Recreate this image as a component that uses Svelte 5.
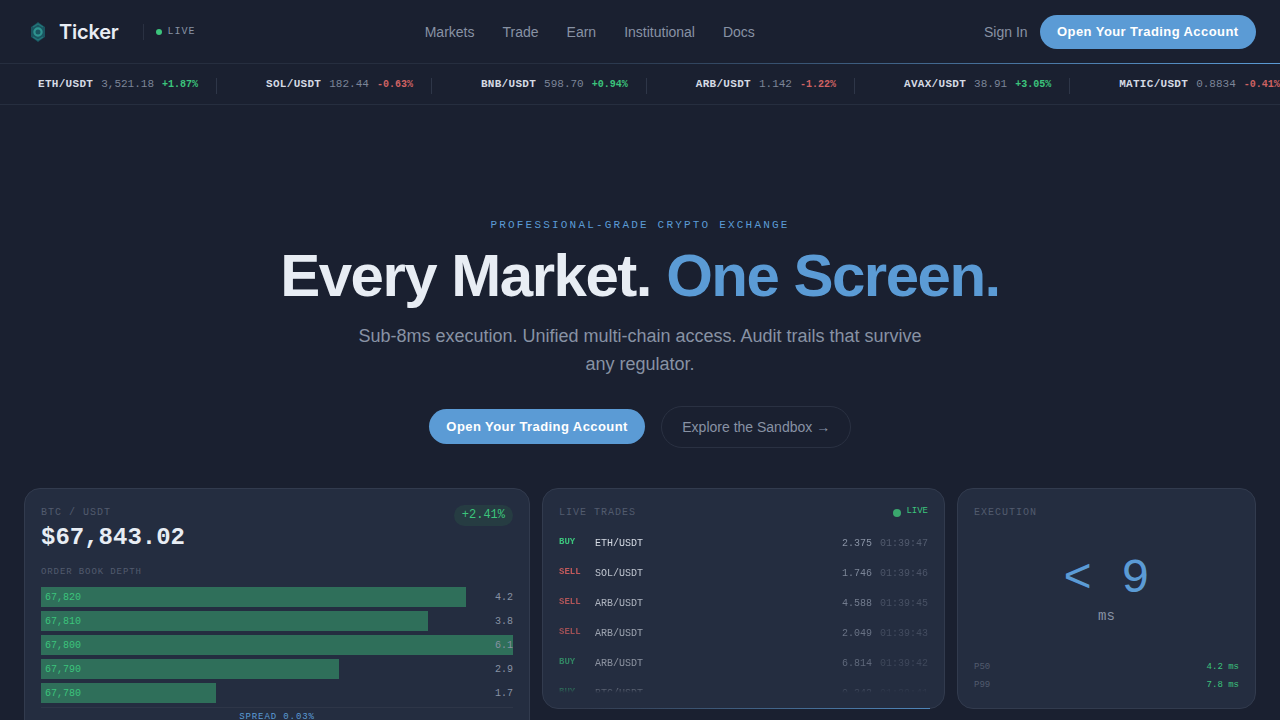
<script lang="ts">
	const navLinks = ['Markets', 'Trade', 'Earn', 'Institutional', 'Docs'];

	const tickers = [
		{ pair: 'ETH/USDT', price: '3,521.18', change: '+1.87%', up: true },
		{ pair: 'SOL/USDT', price: '182.44', change: '-0.63%', up: false },
		{ pair: 'BNB/USDT', price: '598.70', change: '+0.94%', up: true },
		{ pair: 'ARB/USDT', price: '1.142', change: '-1.22%', up: false },
		{ pair: 'AVAX/USDT', price: '38.91', change: '+3.05%', up: true },
		{ pair: 'MATIC/USDT', price: '0.8834', change: '-0.41%', up: false }
	];

	const depth = [
		{ price: '67,820', size: '4.2', pct: 90 },
		{ price: '67,810', size: '3.8', pct: 82 },
		{ price: '67,800', size: '6.1', pct: 100 },
		{ price: '67,790', size: '2.9', pct: 63.2 },
		{ price: '67,780', size: '1.7', pct: 37 }
	];

	const trades = [
		{ side: 'BUY', pair: 'ETH/USDT', amount: '2.375', time: '01:39:47', fade: 1 },
		{ side: 'SELL', pair: 'SOL/USDT', amount: '1.746', time: '01:39:46', fade: 0.88 },
		{ side: 'SELL', pair: 'ARB/USDT', amount: '4.588', time: '01:39:45', fade: 0.78 },
		{ side: 'SELL', pair: 'ARB/USDT', amount: '2.049', time: '01:39:43', fade: 0.68 },
		{ side: 'BUY', pair: 'ARB/USDT', amount: '6.814', time: '01:39:42', fade: 0.58 },
		{ side: 'BUY', pair: 'BTC/USDT', amount: '0.342', time: '01:39:41', fade: 0.55 }
	];
</script>

<div class="page">
	<nav class="nav">
		<div class="brand">
			<svg class="logo" viewBox="0 0 16 20" width="16" height="20" aria-hidden="true">
				<path d="M8 0 L12 3 L15 5 V15 L12 17 L8 20 L4 17 L1 15 V5 L4 3 Z" fill="#1a5560" />
				<circle cx="8" cy="10" r="3.6" fill="none" stroke="#2f9490" stroke-width="2.2" />
				<path d="M3 5 L8 2 L13 5 M3 15 L8 18 L13 15" fill="none" stroke="#24767a" stroke-width="1.4" />
			</svg>
			<span class="wordmark">Ticker</span>
			<span class="status"><i class="dot"></i>LIVE</span>
		</div>
		<div class="links">
			{#each navLinks as link}
				<a href="#top">{link}</a>
			{/each}
		</div>
		<div class="actions">
			<a class="signin" href="#top">Sign In</a>
			<button class="primary">Open Your Trading Account</button>
		</div>
	</nav>

	<div class="ticker">
		{#each tickers as t}
			<div class="tick">
				<span class="tick-pair">{t.pair}</span>
				<span class="tick-price">{t.price}</span>
				<span class="tick-change" class:up={t.up} class:down={!t.up}>{t.change}</span>
			</div>
		{/each}
	</div>

	<section class="hero">
		<p class="eyebrow">PROFESSIONAL-GRADE CRYPTO EXCHANGE</p>
		<h1>Every Market. <span>One Screen.</span></h1>
		<p class="sub">Sub-8ms execution. Unified multi-chain access. Audit trails that survive any regulator.</p>
		<div class="cta">
			<button class="primary">Open Your Trading Account</button>
			<button class="ghost">Explore the Sandbox <span class="arrow">→</span></button>
		</div>
	</section>

	<section class="cards">
		<div class="card book">
			<div class="book-head">
				<div>
					<div class="label">BTC / USDT</div>
					<div class="price">$67,843.02</div>
				</div>
				<span class="badge">+2.41%</span>
			</div>
			<div class="label small">ORDER BOOK DEPTH</div>
			<div class="bars">
				{#each depth as row}
					<div class="bar-row">
						<div class="bar" style="width: {row.pct}%"></div>
						<span class="bar-price">{row.price}</span>
						<span class="bar-size">{row.size}</span>
					</div>
				{/each}
			</div>
			<div class="spread">SPREAD 0.03%</div>
		</div>

		<div class="card trades">
			<div class="trades-head">
				<span class="label">LIVE TRADES</span>
				<span class="live-tag"><i class="dot big"></i><em>LIVE</em></span>
			</div>
			<div class="trade-list">
				{#each trades as t}
					<div class="trade" style="opacity: {t.fade}">
						<span class="side" class:buy={t.side === 'BUY'} class:sell={t.side === 'SELL'}>{t.side}</span>
						<span class="pair">{t.pair}</span>
						<span class="amount">{t.amount}</span>
						<span class="time">{t.time}</span>
					</div>
				{/each}
			</div>
		</div>

		<div class="card exec">
			<div class="label">EXECUTION</div>
			<div class="exec-main">
				<div class="exec-value">&lt; 9</div>
				<div class="exec-unit">ms</div>
			</div>
			<div class="exec-stats">
				<div><span>P50</span><b>4.2 ms</b></div>
				<div><span>P99</span><b>7.8 ms</b></div>
			</div>
		</div>
	</section>
</div>

<style>
	:global(body) {
		margin: 0;
		background: #1a2030;
	}

	.page {
		height: 720px;
		overflow: hidden;
		background: #1a2030;
		font-family: 'Liberation Sans', Arial, sans-serif;
		color: #e8edf4;
	}

	.nav {
		position: relative;
		display: flex;
		justify-content: space-between;
		align-items: center;
		height: 63px;
		padding: 0 24px;
		border-bottom: 1px solid #262e3f;
	}

	.nav::after {
		content: '';
		position: absolute;
		left: 42%;
		right: 0;
		bottom: -1px;
		height: 1px;
		background: linear-gradient(90deg, transparent, #5b9bd5);
	}

	.brand {
		display: flex;
		align-items: center;
	}

	.logo {
		margin-left: 6px;
	}

	.wordmark {
		margin-left: 13px;
		font-family: Inter, sans-serif;
		font-size: 20px;
		font-weight: 600;
		letter-spacing: -0.2px;
		color: #e8edf4;
	}

	.status {
		display: flex;
		align-items: center;
		gap: 6px;
		height: 16px;
		margin-left: 24px;
		padding-left: 12px;
		border-left: 1px solid #2a3142;
		font-family: 'Liberation Mono', monospace;
		font-size: 10px;
		letter-spacing: 1px;
		color: #8892a4;
	}

	.dot {
		width: 6px;
		height: 6px;
		border-radius: 50%;
		background: #3cc47c;
	}

	.dot.big {
		width: 8px;
		height: 8px;
		background: #3aa76d;
	}

	.links {
		display: flex;
		gap: 28px;
	}

	.links a,
	.signin {
		font-size: 14px;
		color: #8892a4;
		text-decoration: none;
	}

	.actions {
		display: flex;
		align-items: center;
		gap: 12px;
	}

	.primary {
		height: 34px;
		padding: 0 17.5px;
		border: 0;
		border-radius: 17px;
		background: #5b9bd5;
		color: #fff;
		font-family: 'Liberation Sans', Arial, sans-serif;
		font-size: 13px;
		font-weight: 700;
		letter-spacing: 0.42px;
	}

	.ticker {
		display: flex;
		align-items: center;
		height: 40px;
		padding-left: 20px;
		border-bottom: 1px solid #262e3f;
		overflow: hidden;
		white-space: nowrap;
		font-family: 'Liberation Mono', monospace;
	}

	.tick {
		display: flex;
		flex: none;
		align-items: center;
		gap: 8px;
		padding: 0 19px 0 18px;
		margin-right: 31px;
		position: relative;
	}

	.tick::after {
		content: '';
		position: absolute;
		right: 0;
		top: 0;
		height: 16px;
		width: 1px;
		background: #2e3648;
	}

	.tick-pair {
		font-size: 11px;
		font-weight: 700;
		letter-spacing: 0.3px;
		color: #d5dae3;
	}

	.tick-price {
		font-size: 11px;
		color: #7c8598;
	}

	.tick-change {
		font-size: 10px;
		font-weight: 700;
	}

	.up {
		color: #3cc47c;
	}

	.down {
		color: #cf6363;
	}

	.hero {
		display: flex;
		flex-direction: column;
		align-items: center;
		padding-top: 114px;
		text-align: center;
	}

	.eyebrow {
		margin: 0;
		font-family: 'Liberation Mono', monospace;
		font-size: 11px;
		letter-spacing: 0.2em;
		color: #5b9bd5;
	}

	h1 {
		margin: 12px 0 0;
		font-size: 60px;
		line-height: 66px;
		font-weight: 700;
		letter-spacing: -1.5px;
		color: #e8edf4;
	}

	h1 span {
		color: #5b9bd5;
	}

	.sub {
		width: 580px;
		margin: 13px 0 0;
		font-size: 18px;
		line-height: 28px;
		color: #8892a4;
	}

	.cta {
		display: flex;
		align-items: center;
		gap: 16px;
		margin-top: 28px;
	}

	.cta .primary {
		height: 35px;
		margin-top: -1px;
		border-radius: 18px;
	}

	.ghost {
		height: 42px;
		padding: 0 20px;
		border: 1px solid #2a3142;
		border-radius: 21px;
		background: transparent;
		color: #8892a4;
		font-family: 'Liberation Sans', Arial, sans-serif;
		font-size: 14px;
	}

	.cards {
		display: grid;
		grid-template-columns: 506fr 403fr 299fr;
		align-items: start;
		gap: 12px;
		margin-top: 40px;
		padding: 0 24px;
	}

	.card {
		box-sizing: border-box;
		position: relative;
		padding: 16px;
		border: 1px solid #323b4e;
		border-radius: 16px;
		background: #242d40;
		font-family: 'Liberation Mono', monospace;
	}

	.trades,
	.exec {
		height: 221px;
	}

	.label {
		font-size: 10px;
		line-height: 15px;
		letter-spacing: 1px;
		color: #525b6e;
	}

	.label.small {
		margin-top: 16px;
		font-size: 9px;
		line-height: 11px;
		letter-spacing: 0.9px;
	}

	.book-head {
		display: flex;
		justify-content: space-between;
		align-items: flex-start;
	}

	.price {
		margin-top: 4px;
		font-size: 24px;
		font-weight: 700;
		color: #e8edf4;
	}

	.badge {
		padding: 3px 8px;
		border-radius: 11px;
		background: #263c42;
		color: #3cc47c;
		font-size: 12px;
		line-height: 15px;
	}

	.bars {
		display: flex;
		flex-direction: column;
		gap: 4px;
		margin-top: 9px;
	}

	.bar-row {
		position: relative;
		display: flex;
		justify-content: space-between;
		align-items: center;
		height: 20px;
		font-size: 10px;
	}

	.bar {
		position: absolute;
		left: 0;
		top: 0;
		bottom: 0;
		background: #2f6f5a;
	}

	.bar-price {
		position: relative;
		padding-left: 4px;
		color: #3cc47c;
	}

	.bar-size {
		position: relative;
		color: #8892a4;
	}

	.spread {
		margin-top: 4px;
		padding-top: 4px;
		border-top: 1px solid #2e3648;
		text-align: center;
		font-size: 9px;
		letter-spacing: 0.9px;
		color: #5b9bd5;
	}

	.trades::after {
		content: '';
		position: absolute;
		left: 10%;
		right: 14px;
		bottom: -1px;
		height: 1px;
		background: linear-gradient(90deg, transparent, #4f86ba);
	}

	.trades-head {
		display: flex;
		justify-content: space-between;
		align-items: center;
	}

	.live-tag {
		display: flex;
		align-items: center;
		gap: 5px;
	}

	.live-tag em {
		font-style: normal;
		font-size: 9px;
		color: #3cc47c;
		position: relative;
		top: -2px;
	}

	.trade-list {
		height: 165px;
		margin-top: 8px;
		overflow: hidden;
		mask-image: linear-gradient(180deg, #000 96%, transparent);
	}

	.trade {
		display: flex;
		height: 30px;
		align-items: center;
		font-size: 10px;
	}

	.side {
		width: 36px;
		font-size: 9px;
		font-weight: 700;
		position: relative;
		top: -1px;
	}

	.buy {
		color: #3cc47c;
	}

	.sell {
		color: #d9605f;
	}

	.pair {
		flex: 1;
		color: #d5dae3;
	}

	.amount {
		color: #8892a4;
	}

	.time {
		margin-left: 8px;
		color: #525b6e;
	}

	.exec {
		display: flex;
		flex-direction: column;
	}

	.exec-main {
		flex: 1;
		display: flex;
		flex-direction: column;
		align-items: center;
		justify-content: center;
		margin-top: -7px;
	}

	.exec-value {
		font-size: 48px;
		line-height: 54px;
		color: #5b9bd5;
	}

	.exec-unit {
		font-size: 14px;
		margin-top: 2px;
		color: #8892a4;
	}

	.exec-stats {
		margin-bottom: -6px;
	}

	.exec-stats div {
		display: flex;
		justify-content: space-between;
		height: 18px;
		font-size: 9px;
	}

	.exec-stats span {
		color: #525b6e;
	}

	.exec-stats b {
		color: #3cc47c;
		font-weight: 400;
	}
</style>
